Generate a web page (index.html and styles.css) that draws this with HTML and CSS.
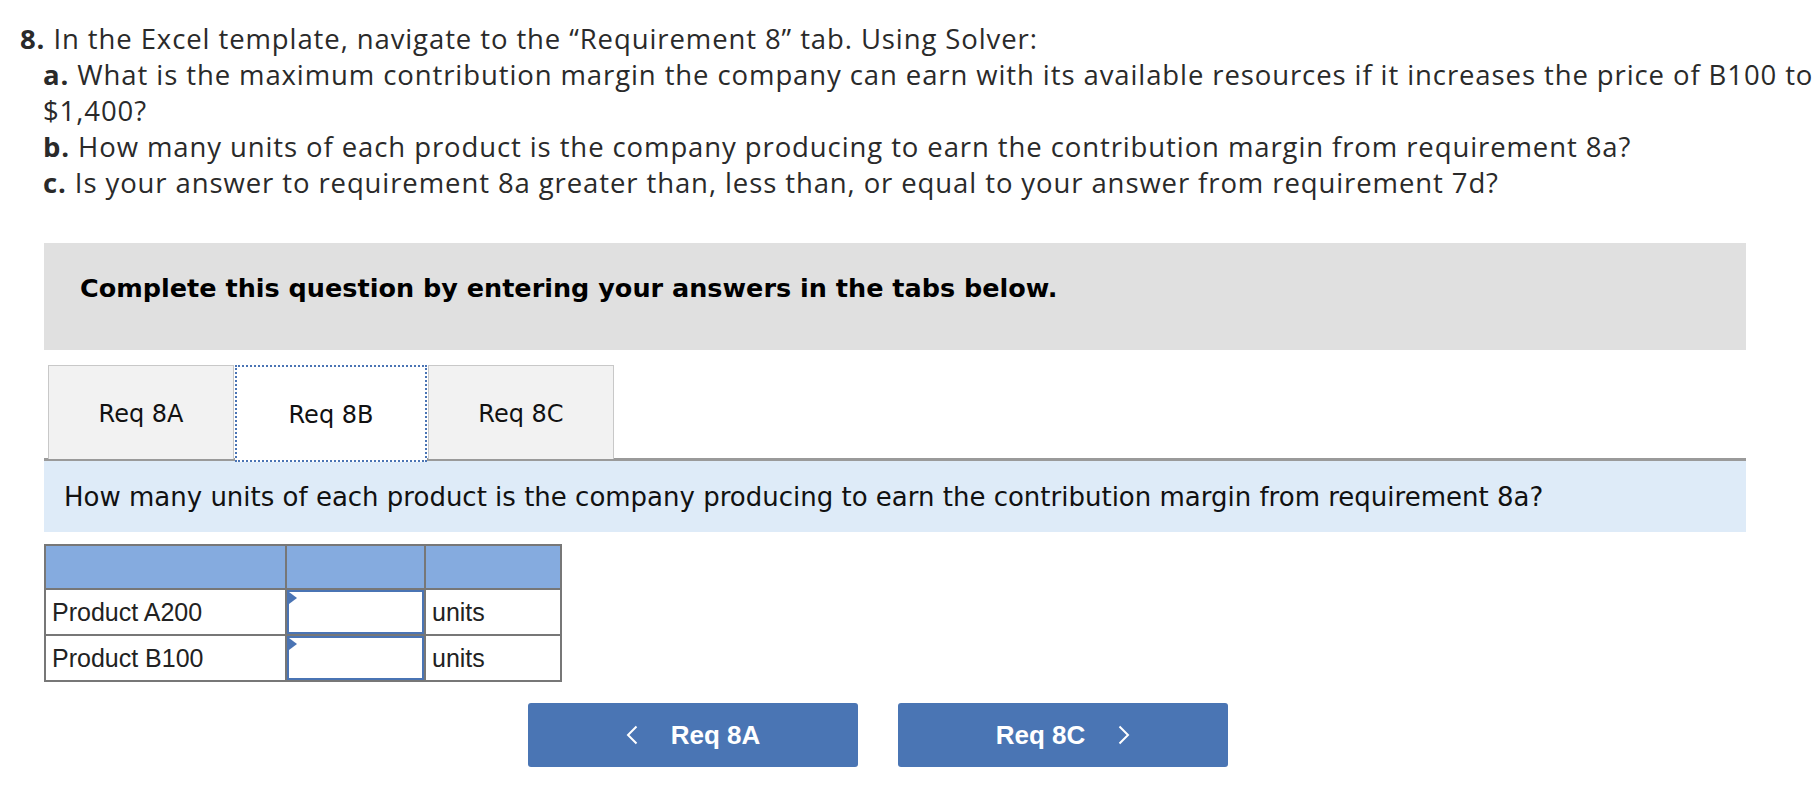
FILE: index.html
```html
<!DOCTYPE html>
<html>
<head>
<meta charset="utf-8">
<link rel="stylesheet" href="styles.css">
</head>
<body>
<div class="question">
  <p class="q-main"><b>8.</b> In the Excel template, navigate to the “Requirement 8” tab. Using Solver:</p>
  <div class="q-subs">
    <p class="q-sub"><b>a.</b> What is the maximum contribution margin the company can earn with its available resources if it increases the price of B100 to<br>$1,400?</p>
    <p class="q-sub"><b>b.</b> How many units of each product is the company producing to earn the contribution margin from requirement 8a?</p>
    <p class="q-sub"><b>c.</b> Is your answer to requirement 8a greater than, less than, or equal to your answer from requirement 7d?</p>
  </div>
</div>

<div class="panel">
  <div class="instructions">Complete this question by entering your answers in the tabs below.</div>

  <div class="tabs">
    <div class="tab">Req 8A</div>
    <div class="tab active">Req 8B</div>
    <div class="tab">Req 8C</div>
  </div>

  <div class="prompt">How many units of each product is the company producing to earn the contribution margin from requirement 8a?</div>

  <table class="grid">
    <tr class="head"><th class="c1"></th><th class="c2"></th><th class="c3"></th></tr>
    <tr>
      <td class="c1">Product A200</td>
      <td class="c2 input"><div class="field"><span class="flag"></span></div></td>
      <td class="c3">units</td>
    </tr>
    <tr>
      <td class="c1">Product B100</td>
      <td class="c2 input"><div class="field"><span class="flag"></span></div></td>
      <td class="c3">units</td>
    </tr>
  </table>

  <div class="nav">
    <button class="btn">
      <svg class="chev" width="12" height="20" viewBox="0 0 12 20"><polyline points="10.5,1.5 2,10 10.5,18.5" fill="none" stroke="#fff" stroke-width="2"/></svg>
      <span>Req 8A</span>
    </button>
    <button class="btn">
      <span>Req 8C</span>
      <svg class="chev" width="12" height="20" viewBox="0 0 12 20"><polyline points="1.5,1.5 10,10 1.5,18.5" fill="none" stroke="#fff" stroke-width="2"/></svg>
    </button>
  </div>
</div>
</body>
</html>
```

FILE: styles.css
```css
html, body {
  margin: 0;
  padding: 0;
  background: #fff;
  overflow: hidden;
}
body {
  width: 1818px;
  height: 788px;
  color: #2a2a2a;
}
.question {
  padding: 21px 0 0 20px;
  font-family: "Open Sans", "Liberation Sans", sans-serif;
  font-size: 27.5px;
  letter-spacing: 0.9px;
  line-height: 36px;
  white-space: nowrap;
}
.question p {
  margin: 0;
}
.q-subs {
  padding-left: 23px;
}
.question b {
  font-weight: 700;
}
.panel {
  margin: 42px 0 0 44px;
  width: 1702px;
}
.instructions {
  background: #e0e0e0;
  height: 107px;
  box-sizing: border-box;
  padding: 30px 0 0 36px;
  line-height: 30px;
  font-family: "DejaVu Sans", Verdana, sans-serif;
  font-weight: 700;
  font-size: 25.5px;
  color: #000;
}
.tabs {
  margin-top: 15px;
  display: flex;
  padding-left: 4px;
  border-bottom: 3px solid #9a9a9a;
  height: 93px;
}
.tab {
  width: 184px;
  height: 91px;
  background: #f2f2f2;
  border: 1px solid #c8c8c8;
  border-bottom: none;
  display: flex;
  align-items: center;
  justify-content: center;
  padding-top: 2px;
  box-sizing: content-box;
  font-family: "DejaVu Sans", Verdana, sans-serif;
  font-size: 24px;
  color: #111;
}
.tab.active {
  background: #fff;
  border: 2px dotted #4a74b4;
  height: 91px;
  width: 188px;
  margin: 0 1px;
}
.prompt {
  background: #deebf8;
  height: 71px;
  display: flex;
  align-items: center;
  padding-left: 20px;
  font-family: "DejaVu Sans", Verdana, sans-serif;
  font-size: 26px;
  color: #111;
}
.grid {
  margin-top: 12px;
  border-collapse: collapse;
  font-family: "Liberation Sans", Arial, sans-serif;
  font-size: 25px;
  color: #222;
}
.grid th, .grid td {
  border: 2px solid #777;
  height: 44px;
  padding: 0 5px 0 6px;
  text-align: left;
  box-sizing: border-box;
}
.grid .head th {
  background: #85abdf;
}
.grid .c1 { width: 241px; }
.grid .c2 { width: 139px; }
.grid .c3 { width: 136px; }
.grid td.input {
  padding: 0;
}
.field {
  position: relative;
  height: 40px;
  border: 2px solid #4a74b4;
  background: #fff;
}
.flag {
  position: absolute;
  left: 0;
  top: 0;
  width: 0;
  height: 0;
  border-top: 6px solid transparent;
  border-bottom: 6px solid transparent;
  border-left: 8px solid #4a74b4;
}
.nav {
  margin-top: 21px;
  padding-left: 484px;
  display: flex;
  gap: 40px;
}
.btn {
  width: 330px;
  height: 64px;
  background: #4a75b4;
  border: none;
  border-radius: 3px;
  color: #fff;
  font-family: "Liberation Sans", Arial, sans-serif;
  font-weight: 700;
  font-size: 26px;
  display: flex;
  align-items: center;
  justify-content: center;
  gap: 33px;
  padding: 0;
}
.chev {
  display: block;
}
```
